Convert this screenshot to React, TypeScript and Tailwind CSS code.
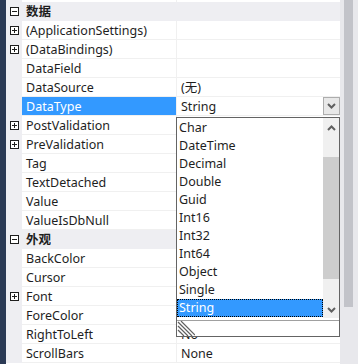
import React from "react";

type Row = {
  kind: "cat" | "prop";
  name: string;
  value?: string;
  expand?: "plus" | "minus";
  selected?: boolean;
  dropdown?: boolean;
};

const rows: Row[] = [
  { kind: "cat", name: "数据", expand: "minus" },
  { kind: "prop", name: "(ApplicationSettings)", expand: "plus" },
  { kind: "prop", name: "(DataBindings)", expand: "plus" },
  { kind: "prop", name: "DataField" },
  { kind: "prop", name: "DataSource", value: "(无)" },
  { kind: "prop", name: "DataType", value: "String", selected: true, dropdown: true },
  { kind: "prop", name: "PostValidation", expand: "plus" },
  { kind: "prop", name: "PreValidation", expand: "plus" },
  { kind: "prop", name: "Tag" },
  { kind: "prop", name: "TextDetached" },
  { kind: "prop", name: "Value" },
  { kind: "prop", name: "ValueIsDbNull" },
  { kind: "cat", name: "外观", expand: "minus" },
  { kind: "prop", name: "BackColor" },
  { kind: "prop", name: "Cursor" },
  { kind: "prop", name: "Font", expand: "plus" },
  { kind: "prop", name: "ForeColor" },
  { kind: "prop", name: "RightToLeft", value: "No" },
  { kind: "prop", name: "ScrollBars", value: "None" },
];

const items = ["Char", "DateTime", "Decimal", "Double", "Guid", "Int16", "Int32", "Int64", "Object", "Single", "String"];

function ExpandBox({ type }: { type: "plus" | "minus" }) {
  return (
    <svg width="9" height="9" viewBox="0 0 9 9" className="block">
      <rect x="0.5" y="0.5" width="8" height="8" fill="white" stroke="#1e1e1e" />
      <line x1="2" y1="4.5" x2="7" y2="4.5" stroke="#1e1e1e" />
      {type === "plus" && <line x1="4.5" y1="2" x2="4.5" y2="7" stroke="#1e1e1e" />}
    </svg>
  );
}

function Chevron({ up }: { up?: boolean }) {
  return (
    <svg width="9" height="6" viewBox="0 0 9 6" className="block">
      <polyline
        points={up ? "1,5 4.5,1.5 8,5" : "1,1 4.5,4.5 8,1"}
        fill="none"
        stroke="#606060"
        strokeWidth="2"
      />
    </svg>
  );
}

export default function App() {
  return (
    <div
      className="w-[358px] h-[364px] flex overflow-hidden bg-white text-[12.5px] text-[#1e1e1e]"
      style={{ fontFamily: '"Noto Sans", "Noto Sans CJK SC", sans-serif' }}
    >
      <div className="w-[6px] shrink-0 bg-[#2b3a55]" />
      <div className="w-[334px] shrink-0 flex flex-col relative">
        {/* partial top row */}
        <div className="h-[2px] flex shrink-0">
          <div className="w-[16px] bg-[#eeeef2]" />
          <div className="w-[154px] bg-white" />
          <div className="w-[164px] bg-white border-l border-[#f0f0f0]" />
        </div>
        {rows.map((r, i) =>
          r.kind === "cat" ? (
            <div key={i} className="h-[19px] shrink-0 flex items-center bg-[#eeeef2]">
              <div className="w-[16px] flex justify-center pl-[1px]">
                {r.expand && <ExpandBox type={r.expand} />}
              </div>
              <div className="pl-[4px] font-bold leading-[20px] h-[19px] overflow-hidden">{r.name}</div>
            </div>
          ) : (
            <div key={i} className="h-[19px] shrink-0 flex">
              <div className="w-[16px] bg-[#eeeef2] flex items-center justify-center pl-[1px]">
                {r.expand && <ExpandBox type={r.expand} />}
              </div>
              <div
                className={
                  "w-[154px] pl-[4px] leading-[20px] border-b border-[#f0f0f0] whitespace-nowrap overflow-hidden " +
                  (r.selected ? "bg-[#3399ff] text-white" : "bg-white")
                }
              >
                {r.name}
              </div>
              <div className="w-[164px] flex border-l border-b border-[#f0f0f0] bg-white">
                <div className="flex-1 pl-[4px] leading-[20px] h-[18px] overflow-hidden whitespace-nowrap">{r.value ?? ""}</div>
                {r.dropdown && (
                  <div className="w-[17px] h-[18px] border border-[#adadad] bg-[#e8e8e8] flex items-center justify-center">
                    <Chevron />
                  </div>
                )}
              </div>
            </div>
          )
        )}

        {/* dropdown popup */}
        <div className="absolute left-[170px] top-[117px] w-[164px] h-[220px] border border-[#646464] bg-white flex flex-col">
          <div className="h-[200px] flex">
            <div className="flex-1 pt-[1px] flex flex-col">
              {items.map((it) => (
                <div
                  key={it}
                  className={
                    "h-[18px] leading-[16px] pl-[1px] border " +
                    (it === "String"
                      ? "bg-[#3399ff] text-white border-dotted border-black"
                      : "border-transparent")
                  }
                >
                  {it}
                </div>
              ))}
            </div>
            <div className="w-[16px] bg-[#f0f0f0] flex flex-col">
              <div className="h-[17px] flex items-center justify-center pt-[2px]">
                <Chevron up />
              </div>
              <div className="h-[22px]" />
              <div className="h-[122px] bg-[#cdcdcd]" />
              <div className="flex-1" />
              <div className="h-[17px] flex items-center justify-center">
                <Chevron />
              </div>
            </div>
          </div>
          <div className="h-[2px]" />
          <div className="h-[1px] bg-[#a0a0a0]" />
          <div className="flex-1 flex items-end">
            <svg width="18" height="15" viewBox="0 0 18 15" className="block">
              <g stroke="#606060" strokeWidth="1.2">
                <line x1="1" y1="1" x2="15" y2="15" />
                <line x1="1" y1="5" x2="11" y2="15" />
                <line x1="1" y1="9" x2="7" y2="15" />
                <line x1="4" y1="0" x2="18" y2="14" />
              </g>
            </svg>
          </div>
        </div>
      </div>
      <div className="w-[18px] shrink-0 bg-[#e8e8ec] flex">
        <div className="ml-[4px] w-[9px] h-[307px] bg-[#c2c3c9]" />
      </div>
    </div>
  );
}
